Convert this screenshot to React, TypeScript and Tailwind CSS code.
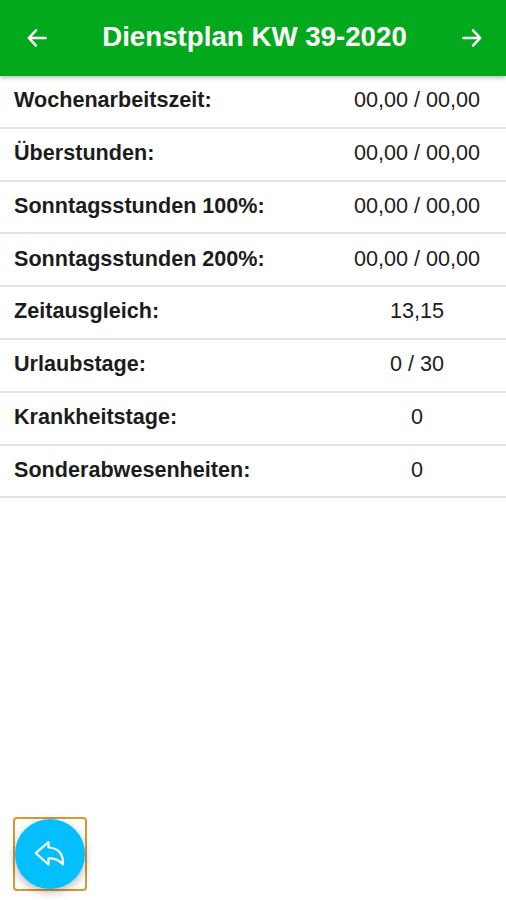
const rows = [
  { label: 'Wochenarbeitszeit:', value: '00,00 / 00,00' },
  { label: 'Überstunden:', value: '00,00 / 00,00' },
  { label: 'Sonntagsstunden 100%:', value: '00,00 / 00,00' },
  { label: 'Sonntagsstunden 200%:', value: '00,00 / 00,00' },
  { label: 'Zeitausgleich:', value: '13,15' },
  { label: 'Urlaubstage:', value: '0 / 30' },
  { label: 'Krankheitstage:', value: '0' },
  { label: 'Sonderabwesenheiten:', value: '0' },
];

function ArrowIcon({ className = '' }: { className?: string }) {
  return (
    <svg
      viewBox="0 0 20 20"
      className={`size-5 fill-none stroke-current stroke-[2.5] ${className}`}
      aria-hidden="true"
    >
      <path d="M9 2.3 1.8 10 9 17.700M1.800 10h16.800" strokeLinecap="round" strokeLinejoin="round" />
    </svg>
  );
}

function Header() {
  return (
    <header className="relative z-10 flex h-[76px] items-center justify-between bg-[#02a91c] pl-[27px] pr-6 text-white shadow-[0_1px_5px_rgba(0,0,0,0.35)]">
      <button type="button" aria-label="Vorherige Woche">
        <ArrowIcon />
      </button>
      <h1 className="-mt-0.5 text-[27.7px] font-bold leading-none">Dienstplan KW 39-2020</h1>
      <button type="button" aria-label="Nächste Woche">
        <ArrowIcon className="rotate-180" />
      </button>
    </header>
  );
}

export default function App() {
  return (
    <div className="flex h-[900px] flex-col bg-white font-['Liberation_Sans',sans-serif] text-[#1c1c1c]">
      <Header />
      <dl className="text-[21.6px]">
        {rows.map((row) => (
          <div
            key={row.label}
            className="flex h-[52.8px] items-center border-b-2 border-[#e4e4e4] pb-[2px] pl-3.5 pr-[25px]"
          >
            <dt className="flex-1 font-bold">{row.label}</dt>
            <dd className="w-[128px] whitespace-nowrap text-center">{row.value}</dd>
          </div>
        ))}
      </dl>
      <button
        type="button"
        aria-label="Zurück"
        className="mb-[9px] ml-[13px] mt-auto flex size-[74px] items-center justify-center rounded-[4px] border-2 border-[#dd9633]"
      >
        <span className="flex size-[70px] items-center justify-center rounded-full bg-[#04bffe] text-white shadow-[0_3px_10px_rgba(0,0,0,0.3)]">
          <svg viewBox="0 0 32 28" className="h-7 w-8 fill-none stroke-current stroke-[2.2]" aria-hidden="true">
            <path
              d="M14.500 2 1.800 13.200 14.500 24.500v-6c6.500-.5 10.500 1.500 14.500 6C29.500 14 24.500 7.800 14.500 7.500z"
              strokeLinejoin="round"
            />
          </svg>
        </span>
      </button>
    </div>
  );
}
